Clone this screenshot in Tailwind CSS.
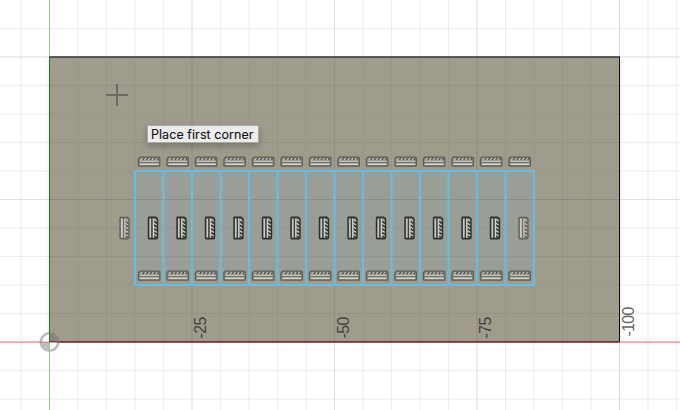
<!DOCTYPE html>
<html lang="en">
<head>
<meta charset="utf-8">
<title>Sketch canvas</title>
<script src="https://cdn.jsdelivr.net/npm/@tailwindcss/browser@4"></script>
</head>
<body class="bg-white overflow-hidden">
<main class="relative w-[680px] h-[410px] overflow-hidden bg-white">
<svg class="block w-[680px] h-[410px]" viewBox="0 0 680 410">
  <defs>
    <g id="constraint">
      <path d="M-10.7 4.2V-2.6L-9.2 -4.3H9.6Q10.8 -4.3 10.8 -3.2V3.8Q10.8 4.7 10 4.7H-10Q-10.7 4.7 -10.7 4.2Z" fill="#8c8c83" stroke="#5e5e56" stroke-width="1.2" stroke-linejoin="round"/>
      <path d="M-8.6 -1l2-2.4M-4.9 -1l2-2.4M-1.2 -1l2-2.4M2.5 -1l2-2.4M6.2 -1l2-2.4" stroke="#c2c2bb" stroke-width="1.1"/>
      <path d="M-6.4 -1.4l1.6-2M-2.7 -1.4l1.6-2M1 -1.4l1.6-2M4.7 -1.4l1.6-2M8.2 -1.4l1.2-1.8" stroke="#53534c" stroke-width="1.2"/>
      <path d="M-9.2 -.1H9.5" stroke="#cbcbc5" stroke-width="1.1"/>
      <path d="M-9.8 1.2H10" stroke="#6c6c65" stroke-width="1"/>
      <path d="M-9.2 2.8H9.5" stroke="#d2d2cd" stroke-width="1.6"/>
    </g>
    <g id="strong">
      <path d="M-10.7 4.2V-2.6L-9.2 -4.3H9.6Q10.8 -4.3 10.8 -3.2V3.8Q10.8 4.7 10 4.7H-10Q-10.7 4.7 -10.7 4.2Z" fill="#6e706b" stroke="#2e2f2d" stroke-width="1.4" stroke-linejoin="round"/>
      <path d="M-8.6 -1l2-2.4M-4.9 -1l2-2.4M-1.2 -1l2-2.4M2.5 -1l2-2.4M6.2 -1l2-2.4" stroke="#d2d2ce" stroke-width="1.1"/>
      <path d="M-6.4 -1.4l1.6-2M-2.7 -1.4l1.6-2M1 -1.4l1.6-2M4.7 -1.4l1.6-2M8.2 -1.4l1.2-1.8" stroke="#2e2f2d" stroke-width="1.3"/>
      <path d="M-9.2 -.1H9.5" stroke="#dededb" stroke-width="1.2"/>
      <path d="M-9.8 1.3H10" stroke="#383937" stroke-width="1.1"/>
      <path d="M-9.2 2.9H9.5" stroke="#c8c8c4" stroke-width="1.5"/>
    </g>
    <filter id="shade" x="-5%" y="-5%" width="110%" height="110%"><feGaussianBlur stdDeviation="3"/></filter>
  </defs>
  <rect x="50" y="60" width="569" height="278" fill="#000" opacity=".13" filter="url(#shade)"/>
  <rect x="49" y="57" width="571" height="285" fill="#9f9b8d"/>
  <rect x="135" y="171" width="399" height="114" fill="#999f96"/>
  <g id="grid"></g>
  <path d="M0 342H49M620 342H680" stroke="#f3b0b4" stroke-width="2"/>
  <path d="M49.5 0V57M49.5 343V410" stroke="#7fd97f"/>
  <path d="M49 57H620" stroke="#5d5d59" stroke-width="2"/>
  <path d="M49 57.5H620" stroke="#333" opacity=".35"/>
  <path d="M49.5 57V342" stroke="#187a1c"/>
  <path d="M619.5 57V342" stroke="#0b0b0b"/>
  <path d="M49 341.5H620" stroke="#6a3a3a"/>
  <path d="M49 342.5H620" stroke="#a64f56"/>
  <g>
    <path d="M49.5 342V334H41.5V342ZM49.5 342V350H57.5V342Z" fill="#fff" opacity=".45"/>
    <circle cx="49.5" cy="342" r="8.7" fill="none" stroke="#777" stroke-opacity=".5" stroke-width="2.6"/>
    <path d="M49.5 342V334.6A7.4 7.4 0 0 1 56.9 342ZM49.5 342V349.4A7.4 7.4 0 0 1 42.1 342Z" fill="#666" opacity=".42"/>
    <path d="M49.5 334V342" stroke="#187a1c" opacity=".8"/>
    <path d="M49.5 343V352" stroke="#7fd97f"/>
  </g>
  <g id="cells" fill="none" stroke="#66bce5" stroke-width="2"></g>
  <g id="marks"></g>
  <path d="M106 95H128M117 84V106" stroke="#4b4a45" stroke-opacity=".6" stroke-width="2"/>
  <g class="font-['Liberation_Sans',sans-serif] text-[16px]" fill="#43433e">
    <text transform="translate(206 338.5) rotate(-90)" textLength="22">-25</text>
    <text transform="translate(348.5 338.5) rotate(-90)" textLength="22">-50</text>
    <text transform="translate(491 338.5) rotate(-90)" textLength="22">-75</text>
    <text transform="translate(633.5 336.5) rotate(-90)" textLength="30" fill="#666">-100</text>
  </g>
</svg>
<div class="absolute left-[147px] top-[125px] w-[112px] h-[18px] bg-[#ececec] border border-[#a9a9a7] shadow-[0_3px_7px_rgba(0,0,0,0.25)]">
  <svg class="block w-[110px] h-[16px] font-['Inter',sans-serif] text-[12.5px]"><text x="3" y="13" textLength="102.5" fill="#111" stroke="#111" stroke-width=".1">Place first corner</text></svg>
</div>
</main>
<script>
  const step = 28.5;
  let grid = '';
  // Lines over the body are fainter than lines over the empty plane.
  const line = (d, c, o, w) => `<path d="${d}" stroke="${c}" stroke-opacity="${o}" stroke-width="${w}"/>`;
  for (let k = -1; k <= 22; k++) {
    if (k === 0) continue;
    const x = 49.5 + k * step, major = k % 5 === 0, whole = Number.isInteger(x);
    const o = whole ? (major ? .07 : .035) : (major ? .13 : .065), w = whole ? 2 : 1;
    if (k < 0 || k > 20) grid += line(`M${x} 0V410`, '#000', o, w);
    else {
      grid += line(`M${x} 0V57M${x} 342V410`, '#000', o, w);
      if (k < 20) grid += line(`M${x} 57V342`, '#303a30', whole ? (major ? .07 : .03) : (major ? .14 : .06), w);
    }
  }
  for (let k = -2; k <= 11; k++) {
    if (k === 0) continue;
    const y = 342 - k * step, major = k % 5 === 0, whole = Number.isInteger(y);
    const o = whole ? (major || k === 10 ? .07 : .035) : (major ? .12 : .065), w = whole ? 2 : 1;
    if (k < 0 || k > 9) grid += line(`M0 ${y}H680`, '#000', o, w);
    else grid += line(`M0 ${y}H49M620 ${y}H680`, '#000', o, w) + line(`M50 ${y}H619`, '#303a30', major ? .17 : whole ? .03 : .08, w);
  }
  document.getElementById('grid').innerHTML = grid;

  let cells = '<path d="M134 171H535M134 285H535"/>', marks = '';
  for (let i = 0; i < 15; i++) {
    cells += `<path d="M${135 + i * step} 171V285"/>`;
    const edge = i === 0 || i === 14;
    marks += `<use href="#${edge ? 'constraint' : 'strong'}" transform="translate(${124.7 + i * step} 228) rotate(90)"/>`;
    if (i < 14) {
      const x = 149.1 + i * step;
      marks += `<use href="#constraint" x="${x}" y="161.4"/><use href="#constraint" x="${x}" y="275.5"/>`;
    }
  }
  document.getElementById('cells').innerHTML = cells;
  document.getElementById('marks').innerHTML = marks;
</script>
</body>
</html>
